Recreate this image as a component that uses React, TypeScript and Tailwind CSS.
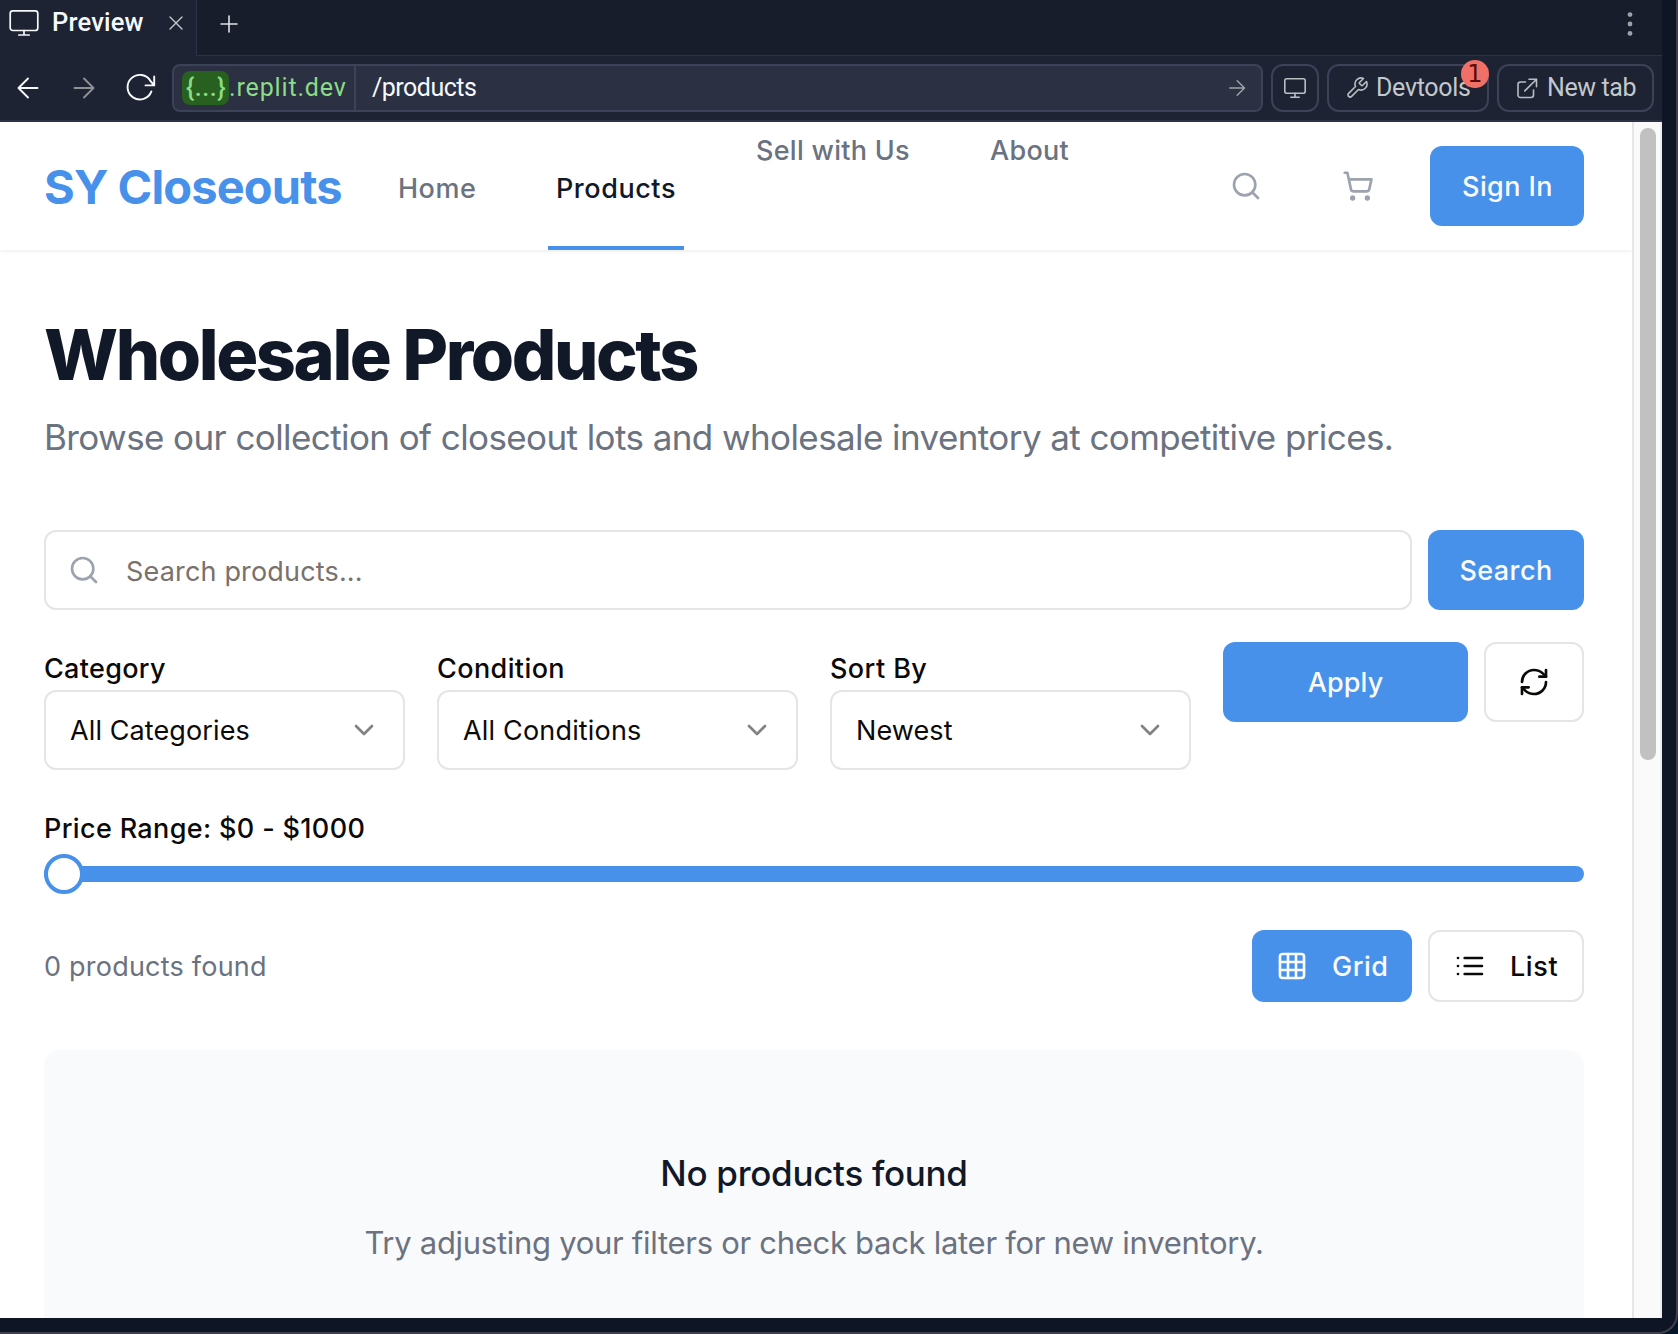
import React from "react";

type IconProps = { className?: string; children: React.ReactNode; box?: string; stroke?: number };

function Glyph({ className = "", children, box = "0 0 24 24", stroke = 2 }: IconProps) {
  return (
    <svg viewBox={box} fill="none" stroke="currentColor" strokeWidth={stroke} strokeLinecap="round" strokeLinejoin="round" className={`shrink-0 ${className}`}>
      {children}
    </svg>
  );
}

function SearchIcon({ className = "" }: { className?: string }) {
  return (
    <Glyph className={`size-8 ${className}`}>
      <circle cx="11" cy="11" r="8" />
      <path d="m21 21-4.3-4.3" />
    </Glyph>
  );
}

function TabStrip() {
  return (
    <div className="flex h-14 shrink-0 bg-[#171d2a]">
      <div className="flex h-14 w-[197px] items-start border-r border-[#2b3245] bg-[#1e2333] pl-2">
        <Glyph box="0 0 32 28" stroke={1.7} className="mt-[9px] h-7 w-8 text-[#f5f9fc]">
          <rect x="2.2" y="1.9" width="27.6" height="19.6" rx="2.6" />
          <path d="M16 21.5V26M10.8 26h10.4" />
        </Glyph>
        <span className="ml-3 w-[104px] text-[25.5px] leading-[45px] font-medium tracking-[0.2px] text-[#f5f9fc]">Preview</span>
        <Glyph box="0 0 16 16" stroke={1.4} className="mt-[15px] ml-3 size-4 text-[#c2c8cc]">
          <path d="M2 2l12 12M14 2L2 14" />
        </Glyph>
      </div>
      <div className="flex flex-1 items-start justify-between border-b border-[#2b3245] pr-[26px] pl-[23px]">
        <Glyph box="0 0 18 18" stroke={1.6} className="mt-[15px] size-[18px] text-[#dfe3e6]">
          <path d="M9 1v16M1 9h16" />
        </Glyph>
        <svg viewBox="0 0 12 24" fill="currentColor" className="mt-3 h-6 w-3 text-[#9da2a6]">
          <circle cx="6" cy="2.6" r="2.4" />
          <circle cx="6" cy="12" r="2.4" />
          <circle cx="6" cy="21.4" r="2.4" />
        </svg>
      </div>
    </div>
  );
}

function Toolbar() {
  return (
    <div className="flex h-[66px] shrink-0 items-center border-b-2 border-[#2b3245] bg-[#1e2333]">
      <Glyph stroke={1.9} className="ml-4 size-6 text-[#f5f9fc]">
        <path d="M21.5 12H2.5M12 2.5L2.5 12l9.5 9.5" />
      </Glyph>
      <Glyph stroke={1.9} className="ml-8 size-6 text-[#8e9194]">
        <path d="M2.5 12h19M12 2.5l9.5 9.5-9.5 9.5" />
      </Glyph>
      <Glyph box="0 0 32 32" stroke={1.9} className="ml-7 size-8 text-[#f5f9fc]">
        <path d="M27.4 19.4A12.3 12.3 0 1 1 26.6 9.2L30.2 13.4M30.2 4.5V13.4h-8.7" />
      </Glyph>
      <div className="ml-4 flex h-12 w-[1091px] items-center rounded-lg border-2 border-[#3c4257] bg-[#2b3042] text-[25px]">
        <div className="flex h-full w-[182px] items-center border-r-2 border-[#3c4257] pl-2 text-[#8bdc87]">
          <span className="flex h-[34px] w-[47px] items-center justify-center rounded-lg bg-[#28601f] pl-px font-medium tracking-[0.5px]">{"{...}"}</span>
          <span className="tracking-[0.85px]">.replit.dev</span>
        </div>
        <span className="flex-1 pl-4 tracking-[-0.5px] text-[#f5f9fc]">/products</span>
        <Glyph box="0 0 18 18" stroke={1.5} className="mr-[15px] size-[18px] text-[#9da2a6]">
          <path d="M1.8 9h14.7M9.2 1.7L16.5 9l-7.3 7.3" />
        </Glyph>
      </div>
      <div className="ml-2 flex h-12 w-12 items-center justify-center rounded-xl border-2 border-[#3c4257] text-[#b9bec2]">
        <Glyph box="0 0 24 22" stroke={1.6} className="h-[22px] w-6">
          <rect x="1.8" y="1.7" width="20.4" height="14.6" rx="2" />
          <path d="M12 16.3V20M7.8 20.2h8.4" />
        </Glyph>
      </div>
      <div className="relative ml-2 flex h-12 w-[162px] items-center rounded-xl border-2 border-[#3c4257] pl-4 text-[#b9bec2]">
        <Glyph stroke={1.6} className="size-6">
          <path d="M14.7 6.3a1 1 0 0 0 0 1.4l1.6 1.6a1 1 0 0 0 1.4 0l3.77-3.77a6 6 0 0 1-7.94 7.94l-6.91 6.91a2.12 2.12 0 0 1-3-3l6.91-6.91a6 6 0 0 1 7.94-7.94l-3.76 3.76z" />
        </Glyph>
        <span className="ml-[7px] text-[25px] tracking-[-0.3px] text-[#c2c8cc]">Devtools</span>
        <span className="absolute -top-[6px] -right-[2px] flex size-7 items-center justify-center rounded-full bg-[#f07068] font-['DejaVu_Sans'] text-[24px] text-[#5c0a0a]">1</span>
      </div>
      <div className="ml-2 flex h-12 w-[157px] items-center rounded-xl border-2 border-[#3c4257] pl-4 text-[#b9bec2]">
        <Glyph stroke={1.6} className="size-6">
          <path d="M10.5 6H5.5a2.5 2.5 0 0 0-2.5 2.5V19a2.5 2.5 0 0 0 2.5 2.5H16a2.5 2.5 0 0 0 2.5-2.5v-5M14 3.2h7.5v7.5M21.5 3.2L9.8 14.9" />
        </Glyph>
        <span className="ml-2 text-[25px] tracking-[-0.39px] text-[#c2c8cc]">New tab</span>
      </div>
    </div>
  );
}

function SiteHeader() {
  return (
    <header className="flex h-32 shrink-0 items-center pr-12 pl-11 text-[27px] font-medium text-[#6b7280] shadow-[0_2px_3px_rgba(0,0,0,0.06)]">
      <span className="w-[346px] pt-[2px] text-[47px] leading-[64px] font-bold tracking-[-0.88px] whitespace-nowrap text-[#4891eb]">SY Closeouts</span>
      <nav className="flex h-full flex-1 gap-16">
        <a className="h-full w-[94px] pt-1 pl-2 leading-[126px] tracking-[0.5px]">Home</a>
        <a className="h-full w-[136px] border-b-4 border-[#4891eb] pt-1 pl-2 leading-[126px] tracking-[0.55px] text-[#111827]">Products</a>
        <a className="w-[170px] pl-2 leading-[58px] tracking-[0.28px] whitespace-nowrap">Sell with Us</a>
        <a className="pl-2 leading-[58px] tracking-[0.28px]">About</a>
      </nav>
      <SearchIcon className="text-[#9ca3af]" />
      <Glyph className="ml-20 size-8 text-[#9ca3af]">
        <circle cx="8" cy="21" r="1" />
        <circle cx="19" cy="21" r="1" />
        <path d="M2.05 2.05h2l2.66 12.42a2 2 0 0 0 2 1.58h9.78a2 2 0 0 0 1.95-1.57l1.65-7.43H5.12" />
      </Glyph>
      <button className="ml-14 h-20 w-[154px] rounded-xl bg-[#4891eb] pt-[2px] pl-px font-medium tracking-[0.4px] text-[#fafaf9]">Sign In</button>
    </header>
  );
}

function SelectField({ label, value, labelClass, valueClass }: { label: string; value: string; labelClass: string; valueClass: string }) {
  return (
    <div className="flex-1">
      <div className={`h-12 leading-[54px] font-medium ${labelClass}`}>{label}</div>
      <div className="flex h-20 items-center justify-between rounded-xl border-2 border-[#e5e5e5] pr-[23px] pl-6">
        <span className={`pt-[2px] ${valueClass}`}>{value}</span>
        <Glyph className="size-8 opacity-50">
          <path d="m6 9 6 6 6-6" />
        </Glyph>
      </div>
    </div>
  );
}

function Filters() {
  return (
    <div className="mt-8 flex gap-8">
      <SelectField label="Category" value="All Categories" labelClass="tracking-[0.31px]" valueClass="tracking-[0.11px]" />
      <SelectField label="Condition" value="All Conditions" labelClass="tracking-[0.4px]" valueClass="tracking-[0.18px]" />
      <SelectField label="Sort By" value="Newest" labelClass="tracking-[0.42px]" valueClass="tracking-[0.1px]" />
      <div className="flex flex-1 gap-4">
        <button className="h-20 flex-1 rounded-xl bg-[#4891eb] pt-[2px] font-medium tracking-[0.12px] text-[#fafaf9]">Apply</button>
        <button className="flex h-20 w-[100px] items-center justify-center rounded-xl border-2 border-[#e5e5e5]">
          <Glyph className="size-8">
            <path d="M3 12a9 9 0 0 1 9-9 9.75 9.75 0 0 1 6.74 2.74L21 8" />
            <path d="M21 3v5h-5" />
            <path d="M21 12a9 9 0 0 1-9 9 9.75 9.75 0 0 1-6.74-2.74L3 16" />
            <path d="M8 16H3v5" />
          </Glyph>
        </button>
      </div>
    </div>
  );
}

function ProductsPage() {
  return (
    <main className="flex flex-1 flex-col pr-12 pl-11 text-[27px] text-[#0c0a09]">
      <h1 className="mt-[69px] text-[70px] leading-[72px] font-extrabold tracking-[-2.38px] text-[#111827]">Wholesale Products</h1>
      <p className="mt-[18px] text-[35px] leading-[56px] tracking-[-0.59px] whitespace-nowrap text-[#6b7280]">
        Browse our collection of closeout lots and wholesale inventory at competitive prices.
      </p>
      <div className="mt-[65px] flex gap-4">
        <div className="flex h-20 flex-1 items-center rounded-xl border-2 border-[#e5e5e5] pl-[22px]">
          <SearchIcon className="text-[#9ca3af]" />
          <span className="mt-1 ml-[26px] tracking-[0.17px] text-[#78716c]">Search products...</span>
        </div>
        <button className="h-20 w-[156px] rounded-xl bg-[#4891eb] pt-[2px] font-medium tracking-[0.42px] text-[#fafaf9]">Search</button>
      </div>
      <Filters />
      <div className="mt-[39px] h-10 leading-10 font-medium tracking-[0.35px]">Price Range: $0 - $1000</div>
      <div className="relative mt-[17px] h-4 rounded-full bg-[#4891eb]">
        <div className="absolute -top-3 left-0 size-10 rounded-full border-4 border-[#4891eb] bg-white" />
      </div>
      <div className="mt-12 flex h-[72px] items-center gap-4">
        <span className="flex-1 pt-[2px] tracking-[0.22px] text-[#6b7280]">0 products found</span>
        <button className="flex h-[72px] w-40 items-center rounded-xl bg-[#4891eb] pl-6 font-medium text-[#fafaf9]">
          <Glyph className="size-8">
            <rect width="18" height="18" x="3" y="3" rx="2" />
            <path d="M3 9h18M3 15h18M9 3v18M15 3v18" />
          </Glyph>
          <span className="ml-6 pt-[2px] tracking-[0.5px]">Grid</span>
        </button>
        <button className="flex h-[72px] w-[156px] items-center rounded-xl border-2 border-[#e5e5e5] pl-6 font-medium">
          <Glyph className="size-8">
            <path d="M3 6h.01M3 12h.01M3 18h.01M8 6h13M8 12h13M8 18h13" />
          </Glyph>
          <span className="ml-6 pt-[2px] tracking-[0.6px]">List</span>
        </button>
      </div>
      <section className="mt-12 flex flex-1 flex-col items-center rounded-t-2xl bg-[#f9fafc] pt-[95px]">
        <h3 className="text-[35px] leading-[56px] font-medium tracking-[-0.3px] text-[#111827]">No products found</h3>
        <p className="mt-[18px] text-[31px] leading-[48px] tracking-[-0.29px] text-[#6b7280]">Try adjusting your filters or check back later for new inventory.</p>
      </section>
    </main>
  );
}

export default function App() {
  return (
    <div className="h-[1334px] w-[1678px] overflow-hidden bg-[#05162a] font-['Roboto',sans-serif]">
      <div className="h-full w-full overflow-hidden rounded-br-[20px] border-r-2 border-b-2 border-[#3f404c] bg-[#0e1525]">
        <div className="flex h-[1318px] w-[1662px] flex-col">
          <TabStrip />
          <Toolbar />
          <div className="flex min-h-0 flex-1 bg-white font-['Inter',sans-serif]">
            <div className="flex w-[1632px] flex-col">
              <SiteHeader />
              <ProductsPage />
            </div>
            <div className="w-[30px] border-r-2 border-l-2 border-r-[#ededed] border-l-[#e6e6e6] bg-[#fafafa] pt-[6px] pl-[6px]">
              <div className="h-[632px] w-4 rounded-full bg-[#c1c1c1]" />
            </div>
          </div>
        </div>
      </div>
    </div>
  );
}
